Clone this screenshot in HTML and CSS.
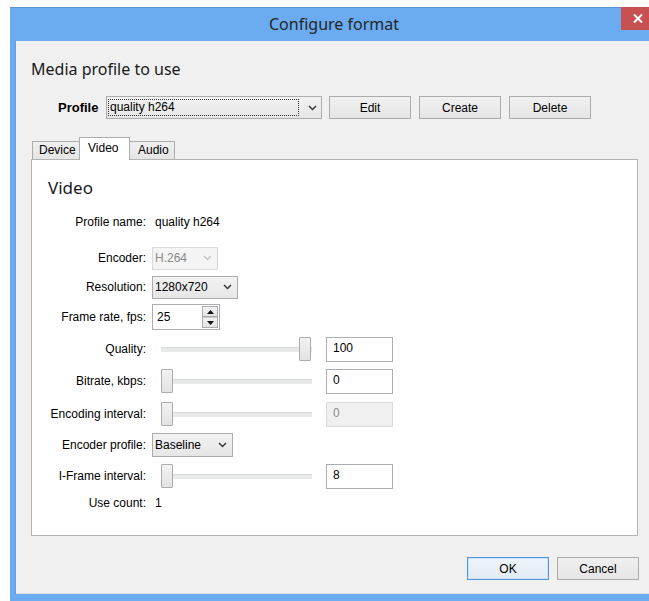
FILE: index.html
```html
<!DOCTYPE html>
<html lang="en">
<head>
<meta charset="utf-8">
<title>Configure format</title>
<link rel="stylesheet" href="styles.css">
</head>
<body>
<div class="window">
  <div class="titlebar">
    <span class="title">Configure format</span>
    <button class="close" aria-label="Close">
      <svg width="10" height="9" viewBox="0 0 10 9"><path d="M1 0.5L9 8.5M9 0.5L1 8.5" stroke="#fff" stroke-width="2"/></svg>
    </button>
  </div>

  <div class="client">
    <h1 class="section-title">Media profile to use</h1>

    <div class="profile-row">
      <span class="profile-label">Profile</span>
      <div class="combo combo-profile">
        <span class="focus-text">quality h264</span>
        <svg class="chev" width="9" height="6" viewBox="0 0 9 6"><path d="M1 1l3.5 3.5L8 1" fill="none" stroke="#3a3a3a" stroke-width="1.5"/></svg>
      </div>
      <button class="btn btn-first">Edit</button>
      <button class="btn">Create</button>
      <button class="btn">Delete</button>
    </div>

    <div class="tabs">
      <div class="tab tab-device">Device</div>
      <div class="tab tab-video active">Video</div>
      <div class="tab tab-audio">Audio</div>
    </div>

    <div class="panel">
      <h2 class="panel-title">Video</h2>
      <div class="form">
        <div class="row">
          <label>Profile name:</label>
          <span class="value">quality h264</span>
        </div>

        <div class="row r-encoder">
          <label>Encoder:</label>
          <div class="combo combo-encoder disabled">
            <span>H.264</span>
            <svg class="chev" width="9" height="6" viewBox="0 0 9 6"><path d="M1 1l3.5 3.5L8 1" fill="none" stroke="#c4c4c4" stroke-width="1.5"/></svg>
          </div>
        </div>

        <div class="row r-resolution">
          <label>Resolution:</label>
          <div class="combo combo-resolution">
            <span>1280x720</span>
            <svg class="chev" width="9" height="6" viewBox="0 0 9 6"><path d="M1 1l3.5 3.5L8 1" fill="none" stroke="#3a3a3a" stroke-width="1.5"/></svg>
          </div>
        </div>

        <div class="row r-framerate">
          <label>Frame rate, fps:</label>
          <div class="spin">
            <span class="spin-text">25</span>
            <div class="spin-buttons">
              <span class="spin-btn"><svg width="7" height="4" viewBox="0 0 7 4"><path d="M0 4h7L3.5 0z" fill="#111"/></svg></span>
              <span class="spin-btn"><svg width="7" height="4" viewBox="0 0 7 4"><path d="M0 0h7L3.5 4z" fill="#111"/></svg></span>
            </div>
          </div>
        </div>

        <div class="row r-quality">
          <label>Quality:</label>
          <div class="slider">
            <div class="track"></div>
            <div class="handle at-max"></div>
          </div>
          <div class="field">100</div>
        </div>

        <div class="row r-bitrate">
          <label>Bitrate, kbps:</label>
          <div class="slider">
            <div class="track"></div>
            <div class="handle"></div>
          </div>
          <div class="field">0</div>
        </div>

        <div class="row r-interval">
          <label>Encoding interval:</label>
          <div class="slider">
            <div class="track"></div>
            <div class="handle"></div>
          </div>
          <div class="field disabled">0</div>
        </div>

        <div class="row r-profile">
          <label>Encoder profile:</label>
          <div class="combo combo-encprofile">
            <span>Baseline</span>
            <svg class="chev" width="9" height="6" viewBox="0 0 9 6"><path d="M1 1l3.5 3.5L8 1" fill="none" stroke="#3a3a3a" stroke-width="1.5"/></svg>
          </div>
        </div>

        <div class="row r-iframe">
          <label>I-Frame interval:</label>
          <div class="slider">
            <div class="track"></div>
            <div class="handle"></div>
          </div>
          <div class="field">8</div>
        </div>

        <div class="row r-usecount">
          <label>Use count:</label>
          <span class="value">1</span>
        </div>
      </div>
    </div>

    <div class="footer">
      <button class="btn default">OK</button>
      <button class="btn">Cancel</button>
    </div>
  </div>
</div>
</body>
</html>
```

FILE: styles.css
```css
html, body {
  margin: 0;
  padding: 0;
}

body {
  background: #ffffff;
  overflow: hidden;
  font-family: "Liberation Sans", Arial, sans-serif;
  font-size: 12px;
  color: #000;
}

/* window frame */
.window {
  margin: 7px 0 0 10px;
  width: 648px;
  height: 595px;
  padding: 0 6px;
  box-sizing: border-box;
  background: #6aabf2;
  box-shadow: inset 0 1px 0 #5a93d2;
  display: flex;
  flex-direction: column;
}

.titlebar {
  position: relative;
  height: 34px;
  flex: none;
  display: flex;
  align-items: center;
  justify-content: center;
}

.title {
  font-family: "Noto Sans", "Open Sans", sans-serif;
  font-size: 16px;
  color: #262626;
  line-height: 20px;
}

.close {
  position: absolute;
  top: 0;
  left: 605px;
  width: 34px;
  height: 23px;
  padding: 0;
  border: 0;
  background: #c75050;
  display: flex;
  align-items: center;
  justify-content: center;
}

/* dialog client area */
.client {
  height: 553px;
  flex: none;
  box-sizing: border-box;
  padding: 18px 14px 0 15px;
  background: #f0f0f0;
  border-bottom: 1px solid #dfe3e8;
  box-shadow: -1px 0 0 #5e9ee6;
  display: flex;
  flex-direction: column;
}

.section-title {
  margin: 0;
  font-family: "Noto Sans", "Open Sans", sans-serif;
  font-size: 16px;
  font-weight: normal;
  line-height: 20px;
  color: #1a1a1a;
}

.profile-row {
  display: flex;
  align-items: center;
  height: 23px;
  margin-top: 17px;
  padding-left: 27px;
}

.profile-label {
  width: 48px;
  flex: none;
  font-weight: bold;
  font-size: 13px;
}

/* combo boxes */
.combo {
  display: flex;
  align-items: center;
  justify-content: space-between;
  height: 23px;
  box-sizing: border-box;
  border: 1px solid #acacac;
  background: linear-gradient(#f2f2f2, #e6e6e6);
  padding: 0 5px 0 2px;
  flex: none;
}

.combo.disabled {
  border-color: #d9d9d9;
  background: #f4f4f4;
  color: #8a8a8a;
}

.combo-profile {
  width: 216px;
  padding-left: 1px;
  padding-right: 4px;
}

.focus-text {
  width: 191px;
  height: 17px;
  box-sizing: border-box;
  border: 1px dotted #333;
  padding-left: 1px;
  line-height: 15px;
}

.combo-encoder { width: 66px; }
.combo-resolution { width: 86px; }
.combo-encprofile { width: 81px; height: 24px; }

.chev { flex: none; }

/* push buttons */
.btn {
  width: 82px;
  height: 23px;
  flex: none;
  padding: 0;
  box-sizing: border-box;
  border: 1px solid #acacac;
  background: linear-gradient(#f0f0f0, #e5e5e5);
  font-family: "Liberation Sans", Arial, sans-serif;
  font-size: 12px;
  color: #000;
  margin-left: 8px;
}

.btn-first { margin-left: 7px; }

.btn.default {
  border-color: #4f98e0;
  box-shadow: inset 0 0 0 1px #cfe3f8;
  background: linear-gradient(#eef4fa, #e2eaf3);
  margin-left: 0;
}

/* tab strip */
.tabs {
  position: relative;
  z-index: 1;
  display: flex;
  align-items: flex-end;
  height: 23px;
  margin-top: 18px;
  margin-bottom: -1px;
  padding-left: 1px;
}

.tab {
  height: 18px;
  margin-bottom: 1px;
  box-sizing: border-box;
  border: 1px solid #acacac;
  border-bottom: 0;
  background: linear-gradient(#f0f0f0, #e5e5e5);
  line-height: 16px;
  padding-left: 6px;
}

.tab-device { width: 48px; }
.tab-video { width: 51px; margin-left: -1px; padding-left: 8px; }
.tab-audio { width: 46px; margin-left: -1px; padding-left: 8px; }

.tab.active {
  position: relative;
  z-index: 2;
  height: 23px;
  margin-bottom: 0;
  background: #fff;
  line-height: 20px;
}

/* tab page */
.panel {
  width: 607px;
  height: 377px;
  flex: none;
  box-sizing: border-box;
  border: 1px solid #b4b4b4;
  background: #fff;
  padding: 17px 0 0 16px;
}

.panel-title {
  margin: 0;
  font-family: "Noto Sans", "Open Sans", sans-serif;
  font-size: 17px;
  font-weight: normal;
  line-height: 22px;
  color: #1a1a1a;
}

.form {
  margin-top: 11px;
  display: flex;
  flex-direction: column;
}

.row {
  display: flex;
  align-items: center;
  height: 24px;
}

.row label {
  width: 98px;
  flex: none;
  margin-right: 6px;
  text-align: right;
}

.value { padding-left: 3px; }

.r-encoder { margin-top: 12px; }
.r-resolution { margin-top: 5px; }
.r-framerate { margin-top: 6px; }
.r-quality { margin-top: 8px; }
.r-bitrate { margin-top: 8px; }
.r-interval { margin-top: 9px; }
.r-profile { margin-top: 7px; }
.r-iframe { margin-top: 7px; }
.r-usecount { margin-top: 3px; }

/* spin box */
.spin {
  width: 68px;
  height: 26px;
  flex: none;
  box-sizing: border-box;
  border: 1px solid #abadb3;
  background: #fff;
  display: flex;
  justify-content: space-between;
  padding: 1px 1px 1px 4px;
}

.spin-text { line-height: 22px; }

.spin-buttons {
  width: 16px;
  display: flex;
  flex-direction: column;
}

.spin-btn {
  flex: 1;
  box-sizing: border-box;
  border: 1px solid #acacac;
  background: linear-gradient(#f2f2f2, #e4e4e4);
  display: flex;
  align-items: center;
  justify-content: center;
}

.spin-btn + .spin-btn { border-top-color: #c8c8c8; }

/* trackbar */
.slider {
  position: relative;
  width: 151px;
  height: 24px;
  margin-left: 9px;
  flex: none;
  display: flex;
  align-items: center;
}

.track {
  flex: 1;
  height: 5px;
  box-sizing: border-box;
  border-top: 1px solid #d8d8d8;
  background: #e8eaea;
}

.handle {
  position: absolute;
  top: 0;
  left: 0;
  width: 12px;
  height: 24px;
  box-sizing: border-box;
  border: 1px solid #acacac;
  border-radius: 1px;
  background: linear-gradient(#f2f2f2, #e3e3e3);
}

.handle.at-max {
  left: auto;
  right: 1px;
}

/* text fields */
.field {
  width: 67px;
  height: 25px;
  flex: none;
  margin-left: 14px;
  box-sizing: border-box;
  border: 1px solid #abadb3;
  background: #fff;
  padding-left: 6px;
  line-height: 21px;
}

.field.disabled {
  border-color: #d9d9d9;
  background: #f0f0f0;
  color: #8a8a8a;
}

/* dialog buttons */
.footer {
  display: flex;
  justify-content: flex-end;
  margin-top: 21px;
  margin-right: -1px;
}
```
